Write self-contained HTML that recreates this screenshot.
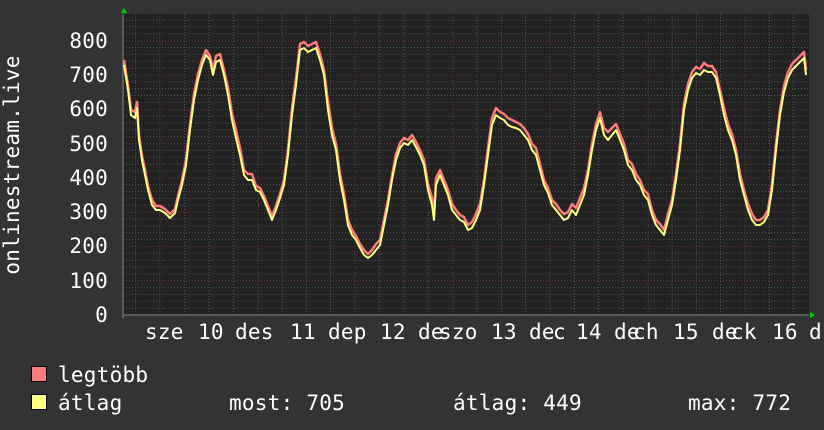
<!DOCTYPE html>
<html><head><meta charset="utf-8"><style>
html,body{margin:0;padding:0;background:#333;}
svg{display:block}
text{font-family:"DejaVu Sans Mono","Liberation Mono",monospace;font-size:21px;letter-spacing:0.25px;fill:#fff}
</style></head><body>
<svg width="824" height="430" viewBox="0 0 824 430" xmlns="http://www.w3.org/2000/svg">
<rect width="824" height="430" fill="#333"/>
<rect x="123" y="14" width="686" height="301" fill="#222"/>
<g stroke-dasharray="1,2" stroke-width="1">
<g stroke="#555">
<path d="M123 308.2H809M123 301.3H809M123 294.5H809M123 287.6H809M123 273.9H809M123 267H809M123 260.2H809M123 253.3H809M123 239.6H809M123 232.7H809M123 225.9H809M123 219H809M123 205.3H809M123 198.4H809M123 191.6H809M123 184.7H809M123 171H809M123 164.1H809M123 157.3H809M123 150.4H809M123 136.7H809M123 129.8H809M123 123H809M123 116.1H809M123 102.4H809M123 95.5H809M123 88.7H809M123 81.8H809M123 68.1H809M123 61.2H809M123 54.4H809M123 47.5H809M123 33.8H809M123 26.9H809M123 20.1H809"/>
<path d="M184.5 14V315M208.8 14V315M233.1 14V315M282 14V315M306.3 14V315M330.6 14V315M379.5 14V315M403.8 14V315M428.1 14V315M477 14V315M501.3 14V315M525.6 14V315M574.5 14V315M598.8 14V315M623.1 14V315M672 14V315M696.3 14V315M720.6 14V315M769.5 14V315M793.8 14V315M135.7 14V315"/>
</g>
<g stroke="#6b3535">
<path d="M123 280.8H809M123 246.5H809M123 212.2H809M123 178H809M123 143.7H809M123 109.5H809M123 75.2H809M123 41H809"/>
<path d="M160 14V315M258 14V315M355 14V315M453 14V315M550 14V315M648 14V315M745 14V315"/>
</g>
</g>
<g stroke="#888" stroke-width="1">
<path d="M123 315H809M123 14V318"/>
</g>
<polyline fill="none" stroke="#ff7a7a" stroke-width="2.5" stroke-linejoin="round" transform="translate(0,-2)" points="124,62 128,88 131,112 135,114 137,104 139,138 142,158 145,172 148,188 152,202 156,208 160,208 165,211 170,216 175,211 178,198 182,182 186,162 190,126 194,96 198,76 202,62 206,52 210,58 213,72 216,58 220,56 224,72 228,90 232,116 236,132 240,150 244,172 248,176 252,176 256,188 260,190 264,198 268,208 272,218 276,208 280,196 284,182 288,152 292,110 296,80 300,46 304,44 308,48 312,46 316,44 320,56 324,72 328,104 332,130 336,146 340,176 344,196 348,222 352,232 356,238 360,246 364,252 368,256 372,252 376,246 380,242 384,222 388,202 392,178 396,156 400,145 404,140 408,142 412,137 416,144 420,152 424,162 428,186 432,200 434,216 436,180 440,172 444,182 448,192 452,206 456,212 460,217 464,219 468,227 472,224 476,216 480,206 484,182 488,150 492,120 496,110 500,114 504,116 508,120 512,122 516,124 520,126 524,130 528,136 532,146 536,150 540,166 544,182 548,190 552,202 556,206 560,212 564,216 568,214 572,206 576,210 580,200 584,190 588,172 592,146 596,126 600,114 604,130 608,134 612,130 616,126 620,136 624,146 628,162 632,166 636,176 640,182 644,192 648,196 652,212 656,222 660,226 664,232 668,216 672,202 676,176 680,146 684,106 688,86 692,74 696,69 700,71 704,65 708,68 712,68 716,74 720,92 724,110 728,126 732,136 736,152 740,176 744,192 748,206 752,216 756,222 760,222 764,219 768,212 772,186 776,146 780,112 784,88 788,74 792,66 796,62 800,58 804,54 806,72"/>
<polyline fill="none" stroke="#ffff80" stroke-width="2" stroke-linejoin="round" points="124,65 128,90 131,115 135,118 137,108 139,140 142,160 145,175 148,190 152,205 156,210 160,210 165,213 170,218 175,213 178,200 182,185 186,165 190,130 194,100 198,80 202,65 206,55 210,60 213,75 216,62 220,60 224,75 228,95 232,120 236,138 240,155 244,175 248,180 252,180 256,190 260,192 264,200 268,210 272,220 276,210 280,198 284,185 288,155 292,115 296,85 300,50 304,48 308,52 312,50 316,48 320,60 324,75 328,110 332,135 336,150 340,180 344,200 348,225 352,235 356,240 360,248 364,255 368,258 372,255 376,250 380,245 384,225 388,205 392,180 396,160 400,148 404,143 408,145 412,140 416,147 420,155 424,165 428,190 432,205 434,220 436,185 440,175 444,185 448,195 452,210 456,215 460,220 464,222 468,230 472,228 476,220 480,210 484,185 488,155 492,125 496,115 500,118 504,120 508,125 512,127 516,128 520,130 524,135 528,140 532,150 536,155 540,170 544,185 548,193 552,205 556,210 560,215 564,220 568,218 572,210 576,215 580,205 584,195 588,175 592,150 596,130 600,118 604,135 608,140 612,135 616,130 620,140 624,150 628,165 632,170 636,180 640,185 644,195 648,200 652,215 656,225 660,230 664,235 668,220 672,205 676,180 680,150 684,110 688,90 692,78 696,73 700,75 704,70 708,72 712,72 716,78 720,95 724,115 728,130 732,140 736,155 740,180 744,195 748,210 752,220 756,225 760,225 764,222 768,215 772,190 776,150 780,115 784,92 788,78 792,70 796,66 800,62 804,58 806,75"/>
<polygon points="121,13 127,13 124,8" fill="#0c0"/>
<polygon points="810,312 810,318 815,315" fill="#0c0"/>
<g text-anchor="end">
<text x="108" y="48">800</text><text x="108" y="82">700</text><text x="108" y="116">600</text>
<text x="108" y="151">500</text><text x="108" y="185">400</text><text x="108" y="219">300</text>
<text x="108" y="253">200</text><text x="108" y="288">100</text><text x="108" y="322">0</text>
</g>
<text transform="translate(19,165) rotate(-90)" text-anchor="middle">onlinestream.live</text>
<g>
<text x="145" y="339">sze</text><text x="198" y="339">10</text><text x="235" y="339">des</text>
<text x="290" y="339">11</text><text x="328" y="339">dep</text><text x="380" y="339">12</text>
<text x="418" y="339">de</text><text x="439" y="339">szo</text><text x="491" y="339">13</text>
<text x="529" y="339">de</text><text x="553" y="339">c</text><text x="576" y="339">14</text>
<text x="614" y="339">de</text><text x="633" y="339">ch</text><text x="673" y="339">15</text>
<text x="712" y="339">de</text><text x="731" y="339">ck</text><text x="772" y="339">16</text>
<text x="809" y="339">d</text>
</g>
<rect x="31.5" y="366.5" width="15" height="15" fill="#ff7a7a" stroke="#000"/>
<rect x="31.5" y="394.5" width="15" height="15" fill="#ffff80" stroke="#000"/>
<text x="58" y="382">legtöbb</text>
<text x="58" y="410">átlag</text>
<text x="229" y="410">most: 705</text>
<text x="453" y="410">átlag: 449</text>
<text x="688" y="410">max: 772</text>
</svg>
</body></html>
